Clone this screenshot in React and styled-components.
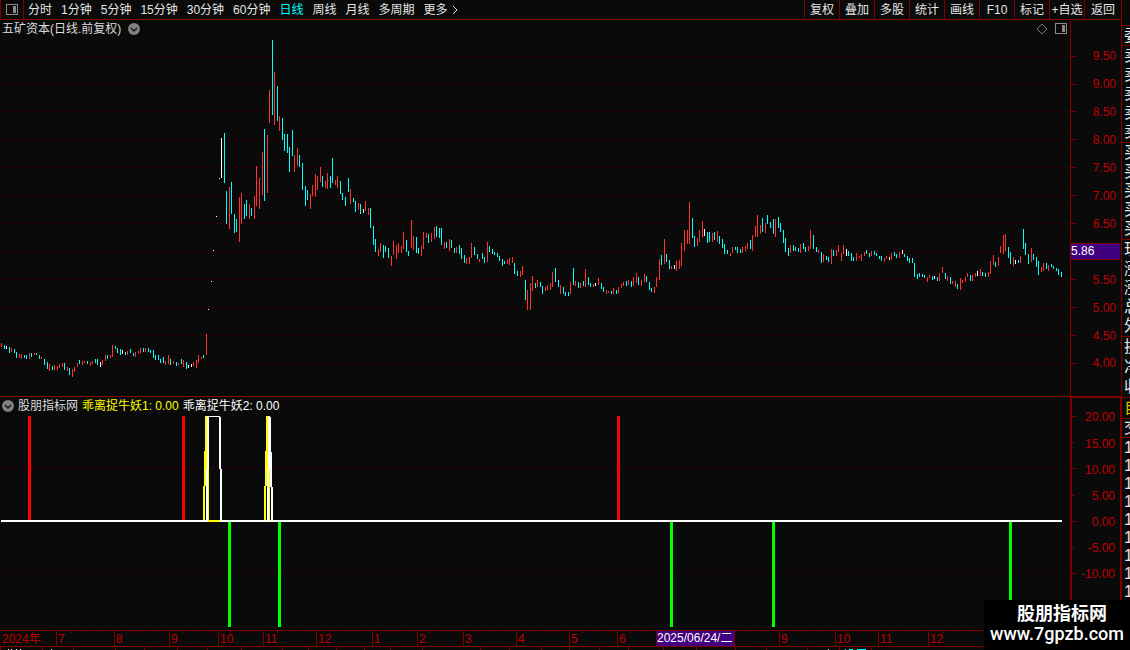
import styled, { createGlobalStyle, css } from "styled-components";

const GlobalStyle = createGlobalStyle`
  * {
    box-sizing: border-box;
  }
  body {
    margin: 0;
    background-color: #0a0a0a;
    color: #dcdcdc;
    font-family: "Liberation Sans", "Noto Sans CJK SC", sans-serif;
    font-size: 12px;
    line-height: 16px;
  }
  button {
    padding: 0;
    border: none;
    background: none;
    color: inherit;
    font: inherit;
    white-space: nowrap;
    cursor: pointer;
  }
  svg {
    display: block;
  }
`;

const Page = styled.div`
  display: grid;
  grid-template-columns: minmax(0, 1fr) 9px;
  height: 100vh;
  overflow: hidden;
`;
const Main = styled.main`
  display: flex;
  flex-direction: column;
  min-width: 0;
  min-height: 0;
`;

const TopBar = styled.header`
  display: flex;
  flex-shrink: 0;
  justify-content: space-between;
  height: 20px;
  border-bottom: 1px solid #800000;
`;
const PanelToggle = styled.button`
  display: flex;
  align-items: center;
  justify-content: center;
  width: 24px;
  border-left: 1px solid #800000;
  border-right: 1px solid #800000;
`;
const Periods = styled.nav`
  display: flex;
  gap: 9px;
`;
const Period = styled.button`
  color: ${({ $active }) => ($active ? "#00ffff" : "#e6e6e6")};
`;
const PeriodMore = styled(Period)`
  display: flex;
  align-items: center;
  gap: 4px;
`;
const LeftGroup = styled.div`
  display: flex;
  gap: 4px;
`;
const Tools = styled.div`
  display: flex;
`;
const Tool = styled.button`
  width: ${({ $wide }) => ($wide ? 37 : 35)}px;
  border-left: 1px solid #800000;
  color: #e6e6e6;
`;

const Pane = styled.section`
  display: flex;
  flex: ${({ $grow }) => $grow} 1 0;
  min-height: 0;
  ${({ $divided }) =>
    $divided &&
    css`
      border-bottom: 1px solid #800000;
    `}
`;
const PlotColumn = styled.div`
  display: flex;
  flex: 1;
  flex-direction: column;
  min-width: 0;
`;
const PaneHeader = styled.div`
  display: flex;
  flex-shrink: 0;
  align-items: center;
  gap: ${({ $gap }) => $gap}px;
  height: ${({ $height }) => $height}px;
  padding: 0 3px 0 2px;
  white-space: nowrap;
`;
const HeaderTools = styled.div`
  display: flex;
  align-items: center;
  gap: 7px;
  margin-left: auto;
`;
const Reading = styled.span`
  color: ${({ $color }) => $color};
`;
const Plot = styled.svg`
  flex: 1;
  width: 100%;
  min-height: 0;
`;

const PriceAxis = styled.div`
  display: flex;
  flex-shrink: 0;
  width: 51px;
  border-left: 1px solid #800000;
`;
const IndicatorAxis = styled(PriceAxis)`
  border-top: 1px solid #800000;
  border-left-width: 2px;
  border-right: 1px solid #800000;
`;
const Ticks = styled.svg`
  flex-shrink: 0;
  width: 5px;
  height: 100%;
`;
const Scale = styled.div`
  display: flex;
  flex: 1;
  flex-direction: column;
  padding: ${({ $top, $bottom }) => `${$top}px 0 ${$bottom}px`};
  color: #c00000;
`;
const ScaleRow = styled.div`
  display: flex;
  flex: 1;
  align-items: center;
  justify-content: flex-end;
  min-height: 0;
  padding-right: 5px;
`;
const CurrentRow = styled(ScaleRow)`
  justify-content: stretch;
  margin-left: -5px;
  padding-right: 1px;
`;
const CurrentPrice = styled.span`
  flex: 1;
  height: 17px;
  border-top: 1px solid #800000;
  border-bottom: 1px solid #800000;
  background-color: #400080;
  color: #ffffff;
  line-height: 15px;
`;

const TimeAxis = styled.div`
  display: grid;
  grid-template-columns: ${({ $columns }) => $columns};
  flex-shrink: 0;
  height: 17px;
  border-top: 1px solid #800000;
  border-bottom: 1px solid #800000;
`;
const Month = styled.div`
  overflow: hidden;
  border-left: ${({ $first }) => ($first ? "none" : "1px solid #800000")};
  padding-left: ${({ $first }) => ($first ? 2 : 1)}px;
  background-image: ${({ $step }) =>
    $step
      ? `repeating-linear-gradient(
          90deg,
          transparent 0 ${$step - 1}px,
          #800000 ${$step - 1}px ${$step}px
        )`
      : "none"};
  background-size: 100% 2px;
  background-repeat: no-repeat;
  color: #c00000;
  white-space: nowrap;
`;
const PickedDate = styled(Month)`
  padding-left: 0;
  background-color: #400080;
  color: #ffffff;
  line-height: 15px;
`;
const StatusBar = styled.svg`
  flex-shrink: 0;
  width: 100%;
  height: 3px;
`;

const Quotes = styled.aside`
  min-height: 0;
  padding-top: 25px;
  overflow: hidden;
  border-left: 1px solid #800000;
`;
const QuoteGroup = styled.div`
  padding: ${({ $top = 0, $bottom = 0 }) => `${$top}px 0 ${$bottom}px 2px`};
  border-top: 1px solid #800000;
  color: ${({ $color }) => $color || "#e6e6e6"};
  font-size: 16px;
  line-height: ${({ $row }) => $row}px;
`;
const QuoteRow = styled.div`
  height: ${({ $row }) => $row}px;
  white-space: nowrap;
`;

const Watermark = styled.div`
  position: absolute;
  right: 0;
  bottom: 0;
  width: 146px;
  height: 50px;
  padding-top: 4px;
  background-color: #000000;
  color: #ffffff;
  text-align: center;
`;
const SiteName = styled.div`
  padding-left: 10px;
  font-size: 18px;
  font-weight: bold;
  line-height: 20px;
`;
const SiteUrl = styled.div`
  font-family: Roboto, sans-serif;
  font-size: 18px;
  font-weight: 500;
  line-height: 20px;
`;

const periods = [
  "分时",
  "1分钟",
  "5分钟",
  "15分钟",
  "30分钟",
  "60分钟",
  "日线",
  "周线",
  "月线",
  "多周期",
];
const tools = ["复权", "叠加", "多股", "统计", "画线", "F10", "标记", "+自选"];

// c = falling, r = rising, w = unchanged; then x, high, low
const bars = `
r 1 343 347,c 4 345 349,w 6 346 349,c 9 347 353,r 11 348 352,c 14 349 353,c 16 352 358,r 19 354 358,
r 21 354 359,c 24 355 358,c 26 355 359,r 29 353 359,c 31 353 357,r 34 353 355,c 36 353 355,c 39 355 359,
r 41 357 359,c 44 359 365,c 47 362 369,r 49 364 371,c 52 366 370,r 54 365 370,r 57 366 370,r 59 364 368,
r 62 363 367,c 64 363 370,r 67 367 371,c 69 368 375,r 72 369 377,r 74 367 372,r 77 363 367,c 79 360 364,
r 82 361 365,r 84 361 363,c 87 361 364,r 90 362 366,r 92 361 364,c 95 359 363,c 97 359 365,w 100 362 367,
r 102 360 365,r 105 355 361,c 107 355 359,r 110 355 358,r 112 345 357,c 115 346 349,c 117 348 353,
c 120 349 355,w 122 350 354,c 125 352 355,r 127 351 355,c 130 349 353,c 133 353 356,r 135 352 357,
r 138 351 354,r 140 348 353,c 143 348 352,r 145 348 352,c 148 348 352,c 150 350 353,c 153 350 358,
c 155 355 360,c 158 355 360,c 160 359 363,c 163 357 363,r 165 361 365,r 168 355 364,c 170 359 365,
r 173 361 364,c 176 362 366,r 178 363 365,c 181 359 364,r 183 360 367,c 186 362 369,w 188 365 368,
w 191 364 367,r 193 362 366,r 196 360 368,r 198 355 363,r 201 357 359,c 203 355 358,r 206 334 355,
w 208 309 310,w 211 281 282,w 213 250 251,w 216 216 217,w 219 178 179,w 221 138 178,c 224 133 183,
c 226 191 224,r 229 187 229,c 231 182 214,c 234 214 233,c 236 219 232,r 239 197 242,r 241 193 224,
c 244 204 219,c 246 200 216,r 249 204 219,c 251 208 216,r 254 196 219,r 256 166 206,r 259 178 209,
r 262 152 195,c 264 129 201,r 267 135 193,r 269 90 123,c 272 40 115,r 274 72 125,c 277 86 121,
r 279 116 131,c 282 118 140,c 284 134 151,c 287 134 153,c 289 147 172,c 292 130 156,r 294 155 172,
r 297 148 166,c 299 155 167,c 302 163 190,c 305 186 206,c 307 190 200,r 310 194 209,r 312 185 196,
r 315 174 197,r 317 176 190,r 320 167 182,c 322 176 187,r 325 181 188,r 327 173 189,c 330 176 188,
c 332 158 183,r 335 180 185,r 337 176 188,c 340 181 194,c 342 193 200,c 345 197 206,c 348 178 192,
r 350 189 204,c 353 198 202,c 355 201 212,r 358 203 210,c 360 204 214,w 363 209 213,r 365 201 211,
r 368 208 215,c 370 208 228,c 373 226 245,c 375 239 252,r 378 249 256,r 380 243 252,c 383 245 258,
c 385 246 252,c 388 248 258,r 391 256 266,r 393 241 255,r 396 245 259,r 398 243 253,r 401 246 253,
r 403 232 249,c 406 240 252,c 408 251 256,r 411 220 248,r 413 236 250,c 416 237 253,c 418 248 254,
r 421 246 256,r 423 232 249,r 426 233 238,c 428 234 243,r 431 233 242,r 434 227 239,c 436 226 237,
c 439 228 238,c 441 228 245,r 444 242 249,c 446 242 248,r 449 239 251,c 451 240 248,c 454 248 253,
r 456 247 253,c 459 245 254,c 461 248 259,c 464 255 263,r 466 258 264,r 469 257 264,r 471 243 258,
c 474 247 255,c 477 254 259,r 479 259 262,c 482 253 259,c 484 257 263,r 487 242 262,c 489 246 252,
c 492 249 254,c 494 252 255,c 497 253 257,c 499 256 261,c 502 259 266,c 504 261 264,r 507 260 264,
r 509 258 265,r 512 257 263,c 514 263 274,c 517 271 276,r 520 271 277,r 522 266 275,c 525 280 300,
r 527 290 310,r 530 283 310,r 532 276 291,c 535 283 288,r 537 280 287,c 540 282 287,c 542 286 294,
r 545 287 291,r 547 285 290,r 550 283 290,r 552 272 287,c 555 268 282,c 558 280 287,r 560 285 294,
c 563 287 294,c 565 292 296,c 568 292 296,r 570 282 294,c 573 268 285,r 575 281 286,c 578 282 288,
r 580 283 288,c 583 281 286,r 585 269 287,c 588 277 285,c 590 283 287,r 593 284 287,w 595 283 286,
r 598 278 285,c 601 283 289,c 603 287 292,r 606 290 294,r 608 291 293,c 611 291 294,r 613 288 294,
c 616 290 294,r 618 287 293,r 621 284 288,r 623 282 286,c 626 281 286,r 628 280 285,c 631 281 287,
r 633 277 286,r 636 273 283,c 638 277 285,r 641 280 286,r 644 274 282,c 646 276 282,c 649 282 290,
c 651 288 292,r 654 287 293,r 656 277 287,r 659 259 280,c 661 255 265,r 664 239 264,c 666 254 262,
c 669 260 269,r 671 266 269,w 674 265 269,r 676 261 271,r 679 260 269,r 681 243 266,r 684 230 251,
r 687 230 244,r 689 202 244,c 692 218 238,c 694 236 247,r 697 238 246,r 699 230 242,r 702 221 237,
w 704 229 236,c 707 232 243,c 709 232 242,r 712 233 242,c 714 232 240,r 717 231 242,c 719 236 244,
c 722 239 248,c 724 244 254,c 727 250 254,r 730 253 256,r 732 247 253,c 735 247 250,c 737 247 253,
c 740 249 253,r 742 247 253,r 745 246 251,r 747 243 249,c 750 240 249,r 752 235 251,r 755 226 237,
r 757 215 237,r 760 225 234,c 762 218 232,r 765 223 233,c 767 215 224,c 770 222 228,c 773 219 234,
r 775 219 237,c 778 217 228,c 780 223 232,c 783 230 243,c 785 238 252,c 788 248 256,r 790 245 253,
c 793 245 251,c 795 247 251,c 798 248 252,r 800 244 253,c 803 243 249,c 805 247 252,r 808 246 251,
r 810 230 249,c 813 235 249,c 816 247 252,r 818 250 253,c 821 252 263,r 823 254 262,c 826 256 260,
c 828 257 262,r 831 249 264,c 833 250 256,r 836 250 256,r 838 245 252,r 841 253 261,r 843 245 254,
w 846 249 256,c 848 251 256,c 851 253 261,c 853 257 261,r 856 253 261,r 859 256 258,r 861 254 261,
r 864 252 256,c 866 250 254,c 869 253 257,r 871 251 256,c 874 251 255,c 876 253 256,c 879 256 259,
c 881 256 261,r 884 258 262,r 886 256 259,w 889 257 260,r 891 253 260,c 894 252 256,c 896 254 258,
r 899 252 258,w 902 250 254,c 904 254 257,c 907 256 261,c 909 258 263,c 912 258 263,c 914 263 277,
c 917 274 279,c 919 273 277,c 922 274 277,c 924 275 278,r 927 277 282,r 929 275 278,c 932 276 280,
w 934 276 279,c 937 277 281,r 939 273 281,r 942 267 273,c 945 273 279,r 947 276 281,c 950 277 284,
r 952 281 284,r 955 281 287,c 957 284 289,r 960 278 290,r 962 280 283,r 965 277 282,r 967 273 277,
c 970 275 281,r 972 275 281,r 975 273 277,w 977 271 276,r 980 269 276,c 982 272 276,c 985 273 277,
r 988 272 277,r 990 261 274,r 993 255 265,c 995 262 267,r 998 257 266,r 1000 246 253,r 1003 235 254,
r 1005 234 251,c 1008 247 258,c 1010 252 264,r 1013 257 266,w 1015 260 264,c 1018 260 263,
r 1020 256 263,c 1023 229 249,c 1025 243 255,c 1028 254 264,r 1031 248 262,c 1033 254 260,
c 1036 257 267,c 1038 261 275,r 1041 267 272,r 1043 263 271,c 1046 263 269,r 1048 265 271,
c 1051 264 267,c 1053 266 269,c 1056 268 271,c 1058 269 275,c 1061 272 277`
  .trim()
  .split(/,\s*/)
  .map((bar) => {
    const [kind, x, high, low] = bar.split(" ");
    return { kind, x: Number(x), high: Number(high), low: Number(low) };
  });
const barColors = { c: "#00ffff", r: "#ff3232", w: "#ffffff" };

const priceGrid = [56, 84, 111, 139, 167, 195, 223, 251, 279, 307, 335, 363];
const priceMinor = [70, 98, 125, 153, 181, 209, 237, 265, 293, 321, 349];
const prices = [
  "9.50",
  "9.00",
  "8.50",
  "8.00",
  "7.50",
  "7.00",
  "6.50",
  null,
  "5.50",
  "5.00",
  "4.50",
  "4.00",
];
const levels = ["20.00", "15.00", "10.00", "5.00", "0.00", "-5.00", "-10.00"];

// fill, x, y, width, height
const signals = [
  ["#ff0000", 28, 416, 3, 104],
  ["#ff0000", 182, 416, 3, 104],
  ["#ff0000", 617, 416, 3, 104],
  ["#00ff00", 228, 522, 3, 105],
  ["#00ff00", 278, 522, 3, 105],
  ["#00ff00", 670, 522, 3, 105],
  ["#00ff00", 772, 522, 3, 105],
  ["#00ff00", 1009, 522, 3, 105],
  ["#ffffff", 1, 520, 1061, 2],
  ["#ffff00", 203, 486, 2, 34],
  ["#ffff00", 204, 451, 3, 35],
  ["#ffff00", 205, 416, 2, 35],
  ["#ffff00", 208, 469, 1, 52],
  ["#ffff00", 208, 520, 12, 2],
  ["#ffffff", 207, 416, 2, 53],
  ["#ffffff", 206, 469, 2, 52],
  ["#ffffff", 208, 416, 12, 1],
  ["#ffffff", 219, 417, 2, 52],
  ["#ffffff", 220, 469, 2, 52],
  ["#ffff00", 264, 486, 2, 34],
  ["#ffff00", 265, 451, 3, 35],
  ["#ffff00", 266, 416, 2, 35],
  ["#ffff00", 269, 469, 1, 52],
  ["#ffffff", 268, 416, 2, 53],
  ["#ffffff", 267, 469, 2, 52],
  ["#ffffff", 269, 417, 2, 35],
  ["#ffffff", 270, 452, 2, 35],
  ["#ffffff", 271, 487, 2, 34],
];

const months = [
  { label: "2024年", days: 56, step: 0 },
  { label: "7", days: 58, step: 15 },
  { label: "8", days: 55, step: 14 },
  { label: "9", days: 49, step: 13 },
  { label: "10", days: 45, step: 12 },
  { label: "11", days: 53, step: 14 },
  { label: "12", days: 56, step: 14 },
  { label: "1", days: 45, step: 12 },
  { label: "2", days: 46, step: 12 },
  { label: "3", days: 53, step: 14 },
  { label: "4", days: 53, step: 14 },
  { label: "5", days: 48, step: 13 },
  { label: "6", days: 39, step: 13 },
  { label: "2025/06/24/二", days: 78, picked: true },
  { label: "", days: 45, step: 15 },
  { label: "9", days: 56, step: 14 },
  { label: "10", days: 43, step: 11 },
  { label: "11", days: 50, step: 13 },
  { label: "12", days: 193, step: 15 },
];
const monthColumns = months.map(({ days }) => `minmax(0, ${days}fr)`).join(" ");

const statusCells = [
  0, 42, 73, 115, 144, 177, 207, 241, 282, 308, 336, 364, 390, 422, 480, 509,
  541, 569, 599, 628, 663, 696, 735, 766, 807, 839, 871,
];

const quoteGroups = [
  { row: 19, rows: ["委"] },
  { row: 19, rows: ["卖", "卖", "卖", "卖", "卖"], bottom: 1 },
  { row: 19, rows: ["买", "买", "买", "买", "买"], bottom: 1 },
  { row: 19, rows: ["现", "涨", "涨", "总", "外"], bottom: 1 },
  { row: 20, rows: ["换", "净", "收"] },
  { row: 20, rows: ["自"], color: "#c8c800" },
  { row: 18, rows: ["交"] },
  { row: 18, rows: ["1", "1", "1", "1", "1", "1", "1", "1", "1"], top: 1 },
];

function PanelIcon() {
  return (
    <svg width="12" height="12" viewBox="0 0 12 12" shapeRendering="crispEdges">
      <rect x="0.5" y="0.5" width="11" height="10" rx="1" fill="none" stroke="#8c8c8c" />
      <rect x="7" y="2" width="3" height="7" fill="#8c8c8c" />
    </svg>
  );
}

function DropIcon() {
  return (
    <svg width="12" height="12" viewBox="0 0 12 12">
      <circle cx="6" cy="6" r="6" fill="#808080" />
      <path d="M3 5 L6 8 L9 5" fill="none" stroke="#141414" strokeWidth="1.4" />
    </svg>
  );
}

function GridLine({ y }) {
  return (
    <line x1="1" x2="1066" y1={y + 0.5} y2={y + 0.5} stroke="#640000" strokeDasharray="1 3" />
  );
}

function AxisTicks({ top, height, major, minor }) {
  return (
    <Ticks viewBox={`0 ${top} 5 ${height}`} preserveAspectRatio="none" shapeRendering="crispEdges">
      {major.map((y) => (
        <rect key={y} x="0" y={y} width="5" height="1" fill="#800000" />
      ))}
      {minor.map((y) => (
        <rect key={y} x="0" y={y} width="2" height="1" fill="#800000" />
      ))}
    </Ticks>
  );
}

function PricePane() {
  return (
    <Pane $grow={377} $divided>
      <PlotColumn>
        <PaneHeader $height={18} $gap={7}>
          <span>五矿资本(日线.前复权)</span>
          <button aria-label="五矿资本">
            <DropIcon />
          </button>
          <HeaderTools>
            <svg width="12" height="12" viewBox="0 0 12 12">
              <path d="M6 1 L11 6 L6 11 L1 6 Z" fill="none" stroke="#787878" />
            </svg>
            <PanelIcon />
          </HeaderTools>
        </PaneHeader>
        <Plot viewBox="0 38 1070 358" preserveAspectRatio="none" shapeRendering="crispEdges">
          {priceGrid.map((y) => (
            <GridLine key={y} y={y} />
          ))}
          {bars.map(({ kind, x, high, low }) => (
            <rect key={x} x={x} y={high} width="1" height={low - high} fill={barColors[kind]} />
          ))}
        </Plot>
      </PlotColumn>
      <PriceAxis>
        <AxisTicks top={20} height={376} major={priceGrid} minor={priceMinor} />
        <Scale $top={22} $bottom={19}>
          {prices.map((price, i) =>
            price ? (
              <ScaleRow key={i}>{price}</ScaleRow>
            ) : (
              <CurrentRow key={i}>
                <CurrentPrice>5.86</CurrentPrice>
              </CurrentRow>
            )
          )}
        </Scale>
      </PriceAxis>
    </Pane>
  );
}

function IndicatorPane() {
  return (
    <Pane $grow={233}>
      <PlotColumn>
        <PaneHeader $height={17} $gap={4}>
          <button aria-label="股朋指标网">
            <DropIcon />
          </button>
          <span>股朋指标网</span>
          <Reading $color="#ffff00">乖离捉牛妖1: 0.00</Reading>
          <Reading $color="#ffffff">乖离捉牛妖2: 0.00</Reading>
        </PaneHeader>
        <Plot viewBox="0 414 1070 216" preserveAspectRatio="none" shapeRendering="crispEdges">
          <GridLine y={468} />
          <GridLine y={521} />
          <GridLine y={573} />
          {signals.map(([fill, x, y, width, height], i) => (
            <rect key={i} x={x} y={y} width={width} height={height} fill={fill} />
          ))}
        </Plot>
      </PlotColumn>
      <IndicatorAxis>
        <AxisTicks top={398} height={232} major={[416, 468, 521, 573]} minor={[442, 495, 547]} />
        <Scale $top={6} $bottom={43}>
          {levels.map((level) => (
            <ScaleRow key={level}>{level}</ScaleRow>
          ))}
        </Scale>
      </IndicatorAxis>
    </Pane>
  );
}

function App() {
  return (
    <>
      <GlobalStyle />
      <Page>
        <Main>
          <TopBar>
            <LeftGroup>
              <PanelToggle aria-label="panel">
                <PanelIcon />
              </PanelToggle>
              <Periods>
                {periods.map((period) => (
                  <Period key={period} $active={period === "日线"}>
                    {period}
                  </Period>
                ))}
                <PeriodMore>
                  更多
                  <svg width="7" height="10" viewBox="0 0 7 10">
                    <path d="M1 1 L5 5 L1 9" fill="none" stroke="#dcdcdc" />
                  </svg>
                </PeriodMore>
              </Periods>
            </LeftGroup>
            <Tools>
              {tools.map((tool) => (
                <Tool key={tool}>{tool}</Tool>
              ))}
              <Tool $wide>返回</Tool>
            </Tools>
          </TopBar>
          <PricePane />
          <IndicatorPane />
          <TimeAxis $columns={monthColumns}>
            {months.map(({ label, days, step, picked }, i) =>
              picked ? (
                <PickedDate key={i}>{label}</PickedDate>
              ) : (
                <Month key={i} $step={step} $first={i === 0}>
                  {label}
                </Month>
              )
            )}
          </TimeAxis>
          <StatusBar viewBox="0 0 1121 3" preserveAspectRatio="none" shapeRendering="crispEdges">
            {statusCells.map((x) => (
              <rect key={x} x={x} y="0" width="1" height="3" fill="#800000" />
            ))}
            <path
              d="M8 2h1v1h-1z M11 2h1v1h-1z M16 2h1v1h-1z M20 2h1v1h-1z M51 2h1v1h-1z M828 2h1v1h-1z"
              fill="#e6e6e6"
            />
            <path d="M845 2h1v1h-1z M849 2h4v1h-4z M857 2h9v1h-9z" fill="#00ffff" />
          </StatusBar>
        </Main>
        <Quotes>
          {quoteGroups.map(({ row, rows, color, top, bottom }, i) => (
            <QuoteGroup key={i} $row={row} $color={color} $top={top} $bottom={bottom}>
              {rows.map((text, j) => (
                <QuoteRow key={j} $row={row}>
                  {text}
                </QuoteRow>
              ))}
            </QuoteGroup>
          ))}
        </Quotes>
      </Page>
      <Watermark>
        <SiteName>股朋指标网</SiteName>
        <SiteUrl>www.7gpzb.com</SiteUrl>
      </Watermark>
    </>
  );
}

export default App;
